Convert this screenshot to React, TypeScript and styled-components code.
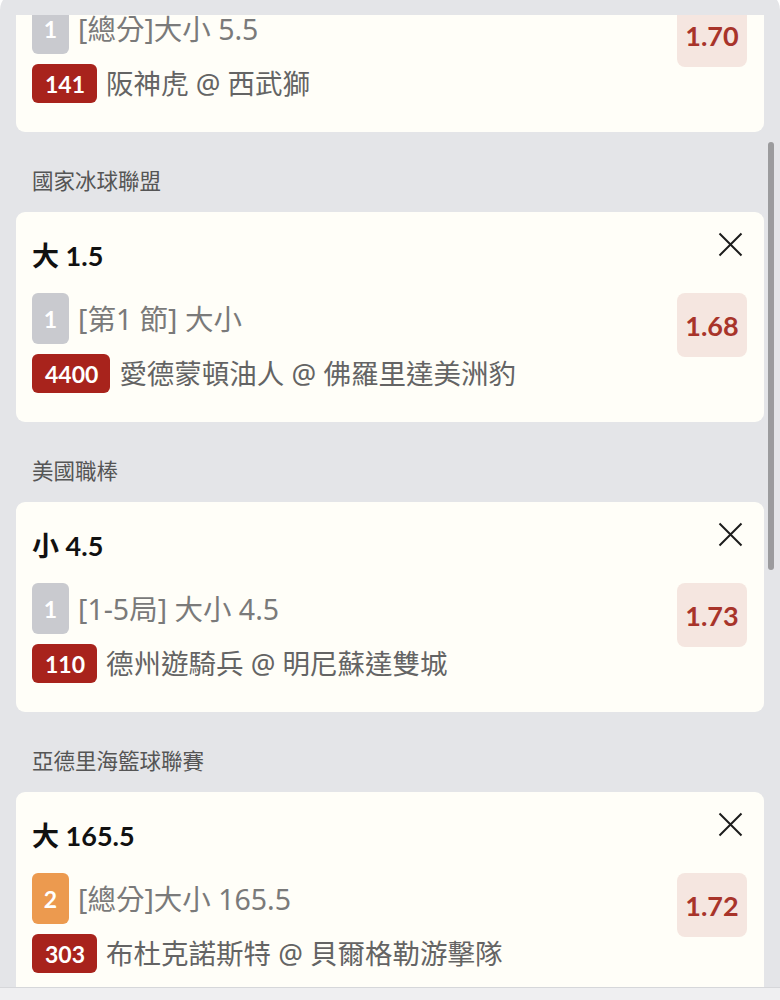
import React from "react";
import styled, { createGlobalStyle } from "styled-components";

type BadgeTone = "grey" | "orange";

interface BetData {
  id: string;
  league: string;
  pick: string;
  legs: number;
  legTone: BadgeTone;
  market: string;
  code: string;
  teams: string;
  odds: string;
}

const bets: BetData[] = [
  {
    id: "b1",
    league: "日本職棒",
    pick: "大 5.5",
    legs: 1,
    legTone: "grey",
    market: "[總分]大小 5.5",
    code: "141",
    teams: "阪神虎 @ 西武獅",
    odds: "1.70",
  },
  {
    id: "b2",
    league: "國家冰球聯盟",
    pick: "大 1.5",
    legs: 1,
    legTone: "grey",
    market: "[第1 節] 大小",
    code: "4400",
    teams: "愛德蒙頓油人 @ 佛羅里達美洲豹",
    odds: "1.68",
  },
  {
    id: "b3",
    league: "美國職棒",
    pick: "小 4.5",
    legs: 1,
    legTone: "grey",
    market: "[1-5局] 大小 4.5",
    code: "110",
    teams: "德州遊騎兵 @ 明尼蘇達雙城",
    odds: "1.73",
  },
  {
    id: "b4",
    league: "亞德里海籃球聯賽",
    pick: "大 165.5",
    legs: 2,
    legTone: "orange",
    market: "[總分]大小 165.5",
    code: "303",
    teams: "布杜克諾斯特 @ 貝爾格勒游擊隊",
    odds: "1.72",
  },
];

const CloseIcon = () => (
  <svg width="25" height="25" viewBox="0 0 25 25" fill="none">
    <path d="M1.5 1.5 L23.5 23.5 M23.5 1.5 L1.5 23.5" stroke="#1c1c1c" strokeWidth="2" />
  </svg>
);

const App: React.FC = () => {
  return (
    <>
      <GlobalStyle />
      <Sheet>
        <TopGap />
        <ScrollArea>
          <BetList>
            {bets.map((bet) => (
              <Section key={bet.id}>
                <LeagueLabel>{bet.league}</LeagueLabel>
                <BetCard>
                  <CardHeader>
                    <Pick>{bet.pick}</Pick>
                    <CloseButton aria-label="remove">
                      <CloseIcon />
                    </CloseButton>
                  </CardHeader>
                  <CardBody>
                    <Details>
                      <MarketRow>
                        <LegBadge tone={bet.legTone}>{bet.legs}</LegBadge>
                        <MarketText>{bet.market}</MarketText>
                      </MarketRow>
                      <TeamsRow>
                        <CodeBadge>{bet.code}</CodeBadge>
                        <TeamsText>{bet.teams}</TeamsText>
                      </TeamsRow>
                    </Details>
                    <OddsBox>{bet.odds}</OddsBox>
                  </CardBody>
                </BetCard>
              </Section>
            ))}
          </BetList>
          <ScrollThumb />
        </ScrollArea>
        <BottomBar />
      </Sheet>
    </>
  );
};

export default App;

const GlobalStyle = createGlobalStyle`
  html, body {
    margin: 0;
    padding: 0;
    background: #ffffff;
  }
  body {
    font-family: Lato, "Noto Sans CJK TC", sans-serif;
    overflow: hidden;
  }
`;

const Sheet = styled.div`
  width: 780px;
  height: 1008px;
  margin-top: -8px;
  background: #e4e5e8;
  border-radius: 18px 18px 0 0;
  display: flex;
  flex-direction: column;
  overflow: hidden;
`;

const TopGap = styled.div`
  height: 23px;
  flex: none;
`;

const ScrollArea = styled.div`
  position: relative;
  flex: 1;
  overflow: hidden;
`;

const BetList = styled.div`
  display: flex;
  flex-direction: column;
  margin-top: -173px;
`;

const ScrollThumb = styled.div`
  position: absolute;
  top: 127px;
  right: 6px;
  width: 6px;
  height: 428px;
  border-radius: 3px;
  background: #9b9b9d;
`;

const BottomBar = styled.div`
  height: 12px;
  flex: none;
  background: #efeff1;
  border-top: 1px solid #d6d7da;
`;

const Section = styled.div`
  display: flex;
  flex-direction: column;
  padding: 0 16px;
`;

const LeagueLabel = styled.div`
  padding: 36px 0 20px 16px;
  font-family: "Noto Sans CJK TC", sans-serif;
  font-size: 21.5px;
  line-height: 24px;
  color: #555555;
`;

const BetCard = styled.div`
  background: #fffef8;
  border-radius: 9px;
  padding: 21px 21px 29px 16px;
  display: flex;
  flex-direction: column;
`;

const CardHeader = styled.div`
  display: flex;
  justify-content: space-between;
  align-items: flex-start;
`;

const Pick = styled.div`
  padding-top: 7px;
  font-family: Lato, "Noto Sans CJK TC", sans-serif;
  font-weight: 700;
  font-size: 27px;
  line-height: 32px;
  color: #111111;
`;

const CloseButton = styled.button`
  width: 25px;
  height: 25px;
  margin-top: -1px;
  padding: 0;
  border: none;
  background: none;
  display: flex;
  cursor: pointer;
`;

const CardBody = styled.div`
  margin-top: 21px;
  display: flex;
  justify-content: space-between;
  align-items: flex-start;
`;

const Details = styled.div`
  display: flex;
  flex-direction: column;
  gap: 10px;
`;

const MarketRow = styled.div`
  display: flex;
  align-items: center;
  gap: 9px;
  height: 51px;
`;

const TeamsRow = styled.div`
  display: flex;
  align-items: center;
  gap: 9px;
  height: 39px;
`;

const LegBadge = styled.div<{ tone: BadgeTone }>`
  width: 37px;
  height: 51px;
  border-radius: 6px;
  background: ${(p) => (p.tone === "orange" ? "#ec9a4f" : "#c9cacf")};
  color: #ffffff;
  display: flex;
  align-items: center;
  justify-content: center;
  font-family: Lato, sans-serif;
  font-weight: 700;
  font-size: 23px;
`;

const CodeBadge = styled.div`
  height: 39px;
  padding: 0 12px 0 13px;
  border-radius: 6px;
  background: #a8231c;
  color: #ffffff;
  display: flex;
  align-items: center;
  font-family: Lato, sans-serif;
  font-weight: 700;
  font-size: 23px;
`;

const MarketText = styled.span`
  font-family: "Noto Sans", "Noto Sans CJK TC", sans-serif;
  font-size: 28.5px;
  line-height: 32px;
  color: #7a7a7a;
  white-space: nowrap;
`;

const TeamsText = styled.span`
  font-family: "Noto Sans", "Noto Sans CJK TC", sans-serif;
  font-size: 27.5px;
  line-height: 32px;
  color: #646464;
  white-space: nowrap;
`;

const OddsBox = styled.div`
  width: 70px;
  height: 64px;
  margin-right: -4px;
  border-radius: 8px;
  background: #f5e6e0;
  color: #a8342a;
  display: flex;
  align-items: center;
  justify-content: center;
  font-family: Lato, sans-serif;
  font-weight: 700;
  font-size: 27px;
`;
